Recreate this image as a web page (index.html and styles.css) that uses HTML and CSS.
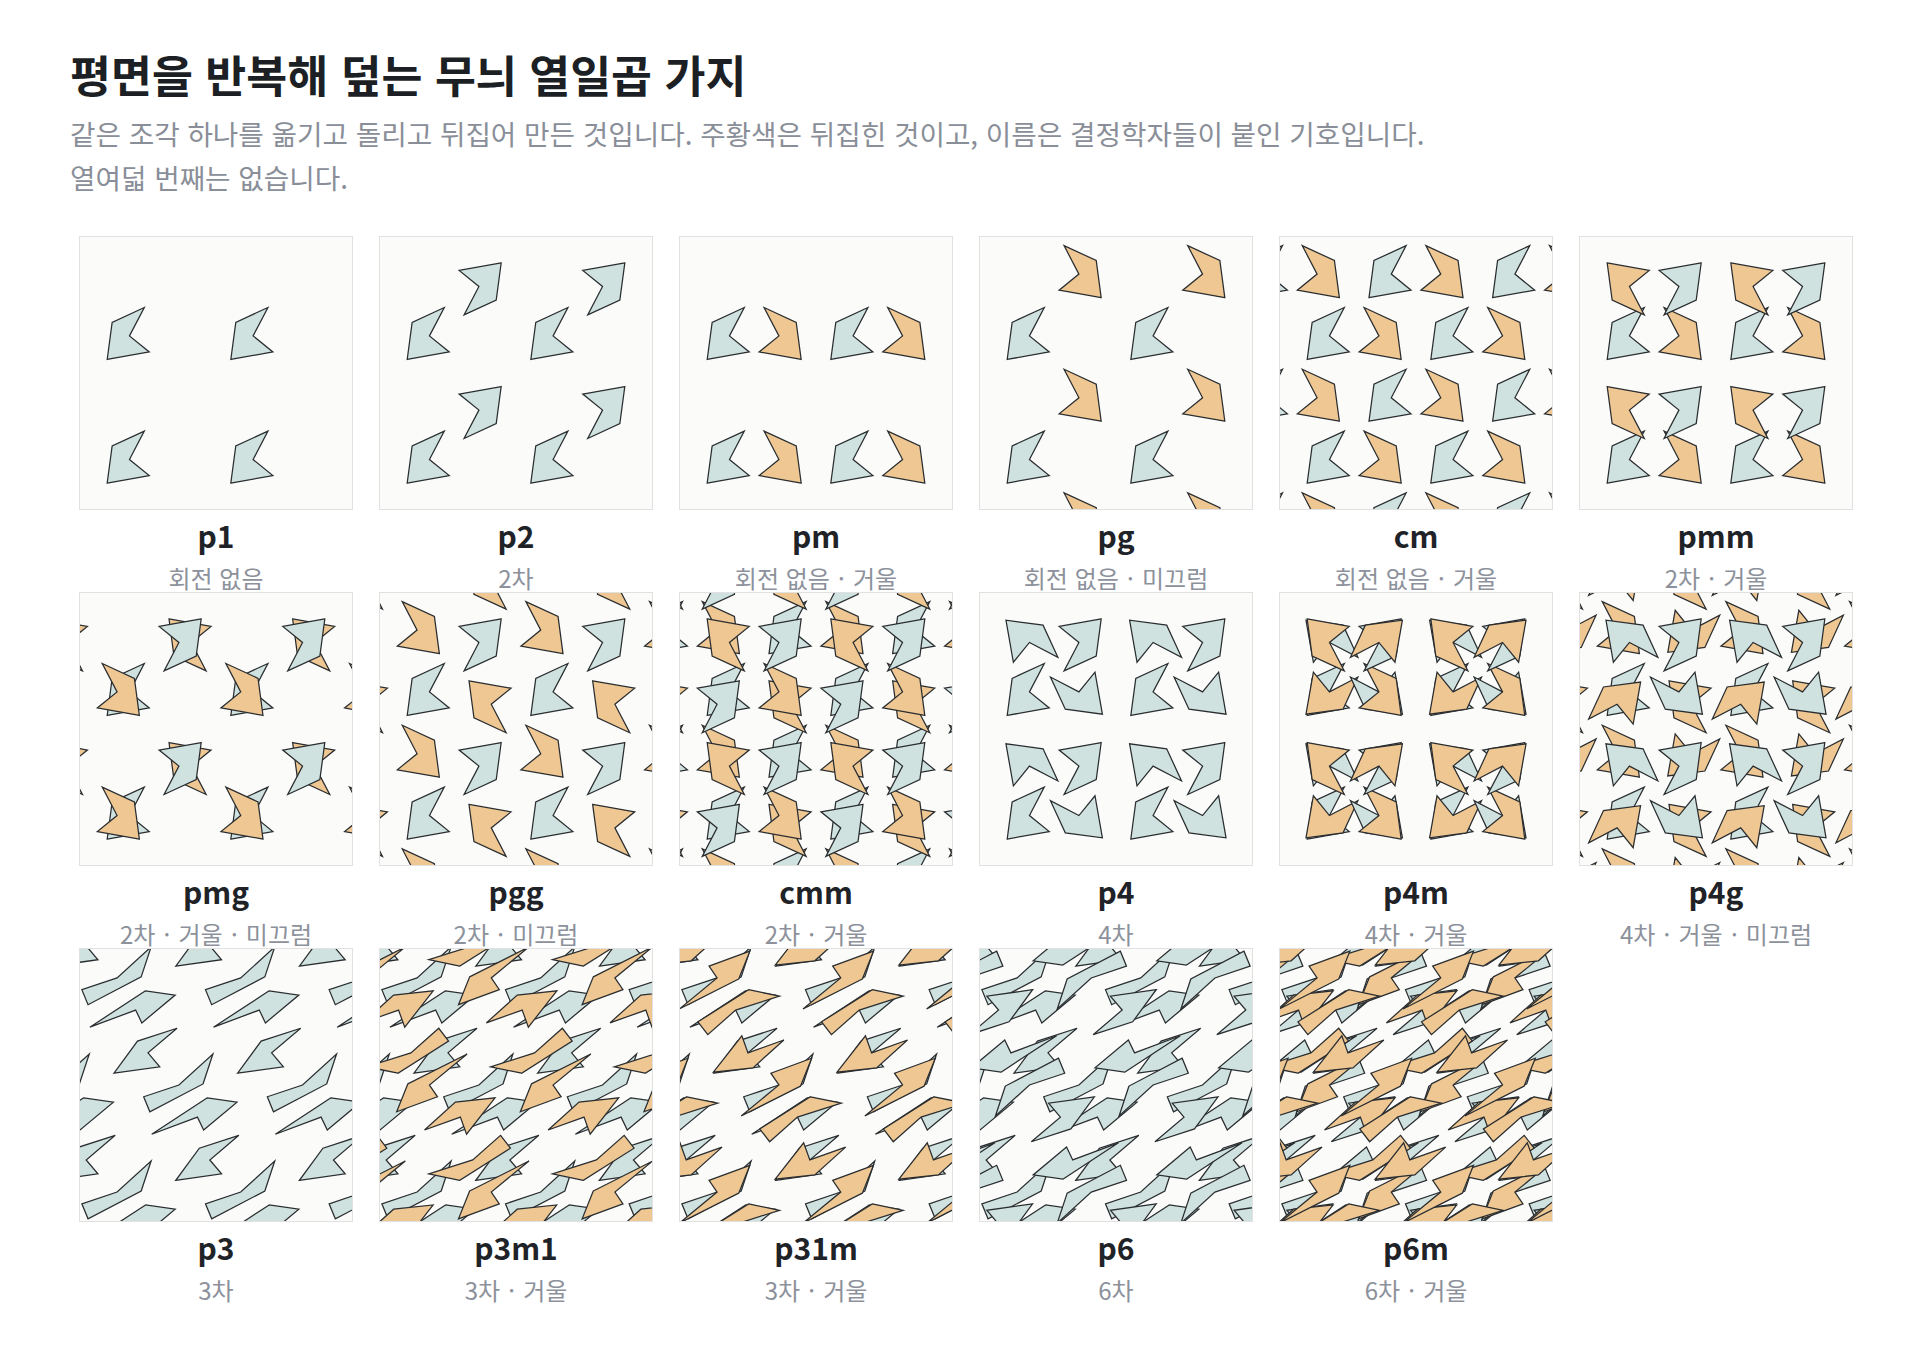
FILE: index.html
```html
<!DOCTYPE html>
<html lang="ko">
<head>
<meta charset="utf-8">
<title>평면을 반복해 덮는 무늬 열일곱 가지</title>
<link rel="stylesheet" href="styles.css">
</head>
<body>
<main class="page">
  <header class="intro">
    <h1 class="title">평면을 반복해 덮는 무늬 열일곱 가지</h1>
    <p class="lead">같은 조각 하나를 옮기고 돌리고 뒤집어 만든 것입니다. 주황색은 뒤집힌 것이고, 이름은 결정학자들이 붙인 기호입니다. 열여덟 번째는 없습니다.</p>
  </header>
  <section class="gallery">
    <figure class="card"><div class="tile" data-group="p1"></div><figcaption><div class="name">p1</div><div class="sub">회전 없음</div></figcaption></figure>
    <figure class="card"><div class="tile" data-group="p2"></div><figcaption><div class="name">p2</div><div class="sub">2차</div></figcaption></figure>
    <figure class="card"><div class="tile" data-group="pm"></div><figcaption><div class="name">pm</div><div class="sub">회전 없음 <span class="dot">·</span> 거울</div></figcaption></figure>
    <figure class="card"><div class="tile" data-group="pg"></div><figcaption><div class="name">pg</div><div class="sub">회전 없음 <span class="dot">·</span> 미끄럼</div></figcaption></figure>
    <figure class="card"><div class="tile" data-group="cm"></div><figcaption><div class="name">cm</div><div class="sub">회전 없음 <span class="dot">·</span> 거울</div></figcaption></figure>
    <figure class="card"><div class="tile" data-group="pmm"></div><figcaption><div class="name">pmm</div><div class="sub">2차 <span class="dot">·</span> 거울</div></figcaption></figure>
    <figure class="card"><div class="tile" data-group="pmg"></div><figcaption><div class="name">pmg</div><div class="sub">2차 <span class="dot">·</span> 거울 <span class="dot">·</span> 미끄럼</div></figcaption></figure>
    <figure class="card"><div class="tile" data-group="pgg"></div><figcaption><div class="name">pgg</div><div class="sub">2차 <span class="dot">·</span> 미끄럼</div></figcaption></figure>
    <figure class="card"><div class="tile" data-group="cmm"></div><figcaption><div class="name">cmm</div><div class="sub">2차 <span class="dot">·</span> 거울</div></figcaption></figure>
    <figure class="card"><div class="tile" data-group="p4"></div><figcaption><div class="name">p4</div><div class="sub">4차</div></figcaption></figure>
    <figure class="card"><div class="tile" data-group="p4m"></div><figcaption><div class="name">p4m</div><div class="sub">4차 <span class="dot">·</span> 거울</div></figcaption></figure>
    <figure class="card"><div class="tile" data-group="p4g"></div><figcaption><div class="name">p4g</div><div class="sub">4차 <span class="dot">·</span> 거울 <span class="dot">·</span> 미끄럼</div></figcaption></figure>
    <figure class="card"><div class="tile" data-group="p3"></div><figcaption><div class="name">p3</div><div class="sub">3차</div></figcaption></figure>
    <figure class="card"><div class="tile" data-group="p3m1"></div><figcaption><div class="name">p3m1</div><div class="sub">3차 <span class="dot">·</span> 거울</div></figcaption></figure>
    <figure class="card"><div class="tile" data-group="p31m"></div><figcaption><div class="name">p31m</div><div class="sub">3차 <span class="dot">·</span> 거울</div></figcaption></figure>
    <figure class="card"><div class="tile" data-group="p6"></div><figcaption><div class="name">p6</div><div class="sub">6차</div></figcaption></figure>
    <figure class="card"><div class="tile" data-group="p6m"></div><figcaption><div class="name">p6m</div><div class="sub">6차 <span class="dot">·</span> 거울</div></figcaption></figure>
  </section>
</main>
<script src="script.js"></script>
</body>
</html>
```

FILE: styles.css
```css
* { box-sizing: border-box; }
html, body { margin: 0; background: #ffffff; }
body {
  font-family: "Noto Sans CJK KR", "Noto Sans", "Liberation Sans", sans-serif;
  color: #1f2328;
}
.page { padding: 46.5px 0 60px 70px; }
.title {
  margin: 0;
  font-size: 44.5px;
  line-height: 53px;
  font-weight: 700;
  color: #1c1f24;
}
.lead {
  margin: 11px 0 0;
  max-width: 1400px;
  font-size: 27.7px;
  line-height: 44px;
  color: #898e98;
  word-break: keep-all;
}
.gallery {
  display: grid;
  grid-template-columns: repeat(6, 274px);
  column-gap: 26px;
  row-gap: 0;
  margin: 37px 0 0 9px;
}
.card { margin: 0; text-align: center; }
.tile {
  width: 274px;
  height: 274px;
  border: 1px solid #e1e1e1;
  background: #fbfbf9;
  overflow: hidden;
}
.tile svg { display: block; width: 272px; height: 272px; }
.piece { stroke: #2a2d30; stroke-width: 1.25; stroke-linejoin: miter; }
.piece.keep { fill: #cfe2e0; }
.piece.flip { fill: #eec793; }
.name {
  margin-top: 8px;
  font-size: 30px;
  line-height: 34px;
  font-weight: 700;
  color: #1f2328;
}
.sub {
  margin-top: 12px;
  font-size: 24px;
  line-height: 28px;
  color: #8c919b;
}
.dot { margin: 0 1.5px; }
```

FILE: script.js
```js
(function () {
  var K = 272 / 220;
  var H = Math.sqrt(3) / 2;
  var motif = [[0.12, 0.11], [0.46, 0.17], [0.30, 0.30], [0.42, 0.53], [0.16, 0.41]];

  var I = [1, 0, 0, 0, 1, 0];
  var R2 = [-1, 0, 0, 0, -1, 0];
  var MX = [-1, 0, 0, 0, 1, 0];
  var MY = [1, 0, 0, 0, -1, 0];
  var R4a = [0, -1, 0, 1, 0, 0];
  var R4b = [0, 1, 0, -1, 0, 0];
  var D1 = [0, 1, 0, 1, 0, 0];
  var D2 = [0, -1, 0, -1, 0, 0];
  var R3a = [0, -1, 0, 1, -1, 0];
  var R3b = [-1, 1, 0, -1, 0, 0];
  var R6a = [0, 1, 0, -1, 1, 0];
  var R6b = [1, -1, 0, 1, 0, 0];
  var M31a = [0, -1, 0, -1, 0, 0];
  var M31b = [-1, 1, 0, 0, 1, 0];
  var M31c = [1, 0, 0, 1, -1, 0];
  var M13a = [0, 1, 0, 1, 0, 0];
  var M13b = [1, -1, 0, 0, -1, 0];
  var M13c = [-1, 0, 0, -1, 1, 0];

  function center(ops) {
    var out = ops.slice();
    ops.forEach(function (o) {
      out.push([o[0], o[1], o[2] + 0.5, o[3], o[4], o[5] + 0.5]);
    });
    return out;
  }

  var G = {
    p1: { hex: false, ops: [I] },
    p2: { hex: false, ops: [I, R2] },
    pm: { hex: false, ops: [I, MX] },
    pg: { hex: false, ops: [I, [-1, 0, 0, 0, 1, 0.5]] },
    cm: { hex: false, ops: center([I, MX]) },
    pmm: { hex: false, ops: [I, R2, MX, MY] },
    pmg: { hex: false, ops: [I, R2, [-1, 0, 0.5, 0, 1, 0], [1, 0, 0.5, 0, -1, 0]] },
    pgg: { hex: false, ops: [I, R2, [-1, 0, 0.5, 0, 1, 0.5], [1, 0, 0.5, 0, -1, 0.5]] },
    cmm: { hex: false, ops: center([I, R2, MX, MY]) },
    p4: { hex: false, ops: [I, R2, R4a, R4b] },
    p4m: { hex: false, ops: [I, R2, R4a, R4b, MX, MY, D1, D2] },
    p4g: { hex: false, ops: [I, R2, R4a, R4b,
      [-1, 0, 0.5, 0, 1, 0.5], [1, 0, 0.5, 0, -1, 0.5],
      [0, 1, 0.5, 1, 0, 0.5], [0, -1, 0.5, -1, 0, 0.5]] },
    p3: { hex: true, ops: [I, R3a, R3b] },
    p3m1: { hex: true, ops: [I, R3a, R3b, M31a, M31b, M31c] },
    p31m: { hex: true, ops: [I, R3a, R3b, M13a, M13b, M13c] },
    p6: { hex: true, ops: [I, R3a, R3b, R2, R6a, R6b] },
    p6m: { hex: true, ops: [I, R3a, R3b, R2, R6a, R6b, M31a, M31b, M31c, M13a, M13b, M13c] }
  };

  var NS = 'http://www.w3.org/2000/svg';

  function toScreen(x, y, hex) {
    var X, Y;
    if (hex) { X = 100 * (x + 0.5 * y); Y = 100 * H * y; }
    else { X = 100 * x; Y = 100 * y; }
    return [(X + 10) * K, (110 - Y) * K];
  }

  document.querySelectorAll('.tile').forEach(function (tile) {
    var g = G[tile.getAttribute('data-group')];
    if (!g) return;
    var svg = document.createElementNS(NS, 'svg');
    svg.setAttribute('viewBox', '0 0 272 272');
    svg.setAttribute('width', '272');
    svg.setAttribute('height', '272');
    for (var i = -4; i <= 5; i++) {
      for (var j = -4; j <= 5; j++) {
        g.ops.forEach(function (o) {
          var pts = [];
          var minx = 1e9, maxx = -1e9, miny = 1e9, maxy = -1e9;
          motif.forEach(function (p) {
            var x = o[0] * p[0] + o[1] * p[1] + o[2] + i;
            var y = o[3] * p[0] + o[4] * p[1] + o[5] + j;
            var s = toScreen(x, y, g.hex);
            minx = Math.min(minx, s[0]); maxx = Math.max(maxx, s[0]);
            miny = Math.min(miny, s[1]); maxy = Math.max(maxy, s[1]);
            pts.push(s[0].toFixed(2) + ',' + s[1].toFixed(2));
          });
          if (maxx < -3 || minx > 275 || maxy < -3 || miny > 275) return;
          var det = o[0] * o[4] - o[1] * o[3];
          var poly = document.createElementNS(NS, 'polygon');
          poly.setAttribute('points', pts.join(' '));
          poly.setAttribute('class', 'piece ' + (det < 0 ? 'flip' : 'keep'));
          svg.appendChild(poly);
        });
      }
    }
    tile.appendChild(svg);
  });
})();
```
